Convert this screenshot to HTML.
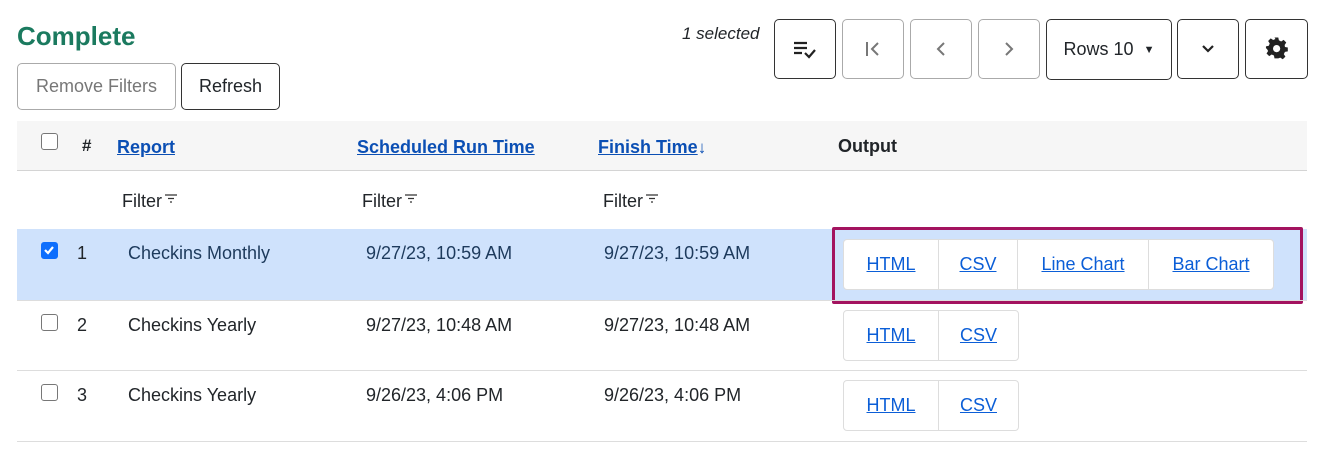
<!DOCTYPE html>
<html><head><style>
*{box-sizing:border-box;margin:0;padding:0}
body{width:1317px;height:457px;background:#fff;font-family:"Liberation Sans",sans-serif;color:#212529;position:relative;overflow:hidden}
.a{position:absolute}
.btn{position:absolute;border:1px solid #333;border-radius:5px;background:#fff;display:flex;align-items:center;justify-content:center;font-size:18px}
.dis{border-color:#aaa;color:#777}
a{color:#0b5ed7;text-decoration:underline}
.h a{color:#0b4fb4;font-weight:bold;font-size:18px}
.t{font-size:18px;position:absolute}
.cb{position:absolute;width:17px;height:17px;border:1.5px solid #777;border-radius:3px;background:#fff}
.grp{position:absolute;display:flex;border:1px solid #ddd;border-radius:4px;background:#fff;height:51px}
.grp div{display:flex;align-items:center;justify-content:center;border-right:1px solid #ddd;font-size:18px}
.grp div:last-child{border-right:none}
.hr{position:absolute;left:17px;width:1290px;height:1px;background:#ddd}
.fi{display:inline-block;vertical-align:top;margin-left:2px;margin-top:3px}
</style></head><body>
<div class="a" style="left:17px;top:21px;font-size:26px;font-weight:bold;color:#1b7a5f">Complete</div>
<div class="btn dis" style="left:17px;top:63px;width:159px;height:47px">Remove Filters</div>
<div class="btn" style="left:181px;top:63px;width:99px;height:47px">Refresh</div>
<div class="a" style="left:682px;top:24px;font-size:17px;font-style:italic">1 selected</div>
<div class="btn" style="left:774px;top:19px;width:62px;height:60px"><svg width="24" height="20" viewBox="0 0 24 20"><path d="M1 4h13M1 9h13M1 14h8" stroke="#222" stroke-width="2.2"/><path d="M12 14l4 4 6-7" stroke="#222" stroke-width="2.2" fill="none"/></svg></div>
<div class="btn dis" style="left:842px;top:19px;width:62px;height:60px"><svg width="18" height="18"><path d="M3 2v14M14 3l-6 6 6 6" stroke="#777" stroke-width="2" fill="none"/></svg></div>
<div class="btn dis" style="left:910px;top:19px;width:62px;height:60px"><svg width="18" height="18"><path d="M12 3l-6 6 6 6" stroke="#777" stroke-width="2" fill="none"/></svg></div>
<div class="btn dis" style="left:978px;top:19px;width:62px;height:60px"><svg width="18" height="18"><path d="M6 3l6 6-6 6" stroke="#777" stroke-width="2" fill="none"/></svg></div>
<div class="btn" style="left:1046px;top:19px;width:126px;height:61px">Rows 10 <span style="font-size:11px;margin-left:10px">▼</span></div>
<div class="btn" style="left:1177px;top:19px;width:62px;height:60px"><svg width="18" height="18"><path d="M4 6l5 5 5-5" stroke="#222" stroke-width="2.2" fill="none"/></svg></div>
<div class="btn" style="left:1245px;top:19px;width:63px;height:60px"><svg width="24" height="24" viewBox="0 0 24 24"><path fill="#222" d="M10 1h4l.6 3 2.4 1.2 2.6-1.7 2.8 2.8-1.7 2.6L21 11l3 .6v4l-3 .6-1.2 2.4 1.7 2.6-2.8 2.8-2.6-1.7L14 23l-.6 0H10l-.6-3-2.4-1-2.6 1.7-2.8-2.8 1.7-2.6L2 13l-1-.6v-2l3-.6 1-2.4-1.7-2.6L6 2l2.6 1.7L11 2.6z" transform="translate(0 -0.5) scale(0.95)"/><circle cx="11.6" cy="11.6" r="3.6" fill="#fff"/></svg></div>

<div class="a" style="left:17px;top:121px;width:1290px;height:49px;background:#f6f6f6"></div>
<div class="hr" style="top:170px;background:#d4d4d4"></div>
<div class="cb" style="left:41px;top:133px"></div>
<div class="a" style="left:82px;top:136px;font-weight:bold;font-size:17px">#</div>
<div class="a h" style="left:117px;top:137px"><a>Report</a></div>
<div class="a h" style="left:357px;top:137px"><a>Scheduled Run Time</a></div>
<div class="a h" style="left:598px;top:137px"><a>Finish Time</a><span style="color:#0b4fb4;font-size:17px">↓</span></div>
<div class="a" style="left:838px;top:136px;font-weight:bold;font-size:18px">Output</div>
<div class="t" style="left:122px;top:191px">Filter<svg class="fi" width="14" height="10"><path d="M1 1h12M4 4.5h6M6 8h2" stroke="#333" stroke-width="1.3"/></svg></div>
<div class="t" style="left:362px;top:191px">Filter<svg class="fi" width="14" height="10"><path d="M1 1h12M4 4.5h6M6 8h2" stroke="#333" stroke-width="1.3"/></svg></div>
<div class="t" style="left:603px;top:191px">Filter<svg class="fi" width="14" height="10"><path d="M1 1h12M4 4.5h6M6 8h2" stroke="#333" stroke-width="1.3"/></svg></div>

<div class="a" style="left:17px;top:229px;width:1290px;height:71px;background:#cfe2fc"></div>
<div class="cb" style="left:41px;top:242px;background:#0d6efd;border-color:#0d6efd"><svg width="14" height="14" style="position:absolute;left:0;top:0"><path d="M3 7l3 3 5-6" stroke="#fff" stroke-width="2.2" fill="none"/></svg></div>
<div class="t" style="left:77px;top:243px">1</div>
<div class="t" style="left:128px;top:243px;color:#1d3a5c">Checkins Monthly</div>
<div class="t" style="left:366px;top:243px;color:#1d3a5c">9/27/23, 10:59 AM</div>
<div class="t" style="left:604px;top:243px;color:#1d3a5c">9/27/23, 10:59 AM</div>
<div class="a" style="left:832px;top:227px;width:471px;height:77px;border:3px solid #a3135f;border-radius:2px"></div>
<div class="grp" style="left:843px;top:239px"><div style="width:95px"><a>HTML</a></div><div style="width:79px"><a>CSV</a></div><div style="width:131px"><a>Line Chart</a></div><div style="width:124px"><a>Bar Chart</a></div></div>
<div class="hr" style="top:300px"></div>

<div class="cb" style="left:41px;top:314px"></div>
<div class="t" style="left:77px;top:315px">2</div>
<div class="t" style="left:128px;top:315px">Checkins Yearly</div>
<div class="t" style="left:366px;top:315px">9/27/23, 10:48 AM</div>
<div class="t" style="left:604px;top:315px">9/27/23, 10:48 AM</div>
<div class="grp" style="left:843px;top:310px"><div style="width:95px"><a>HTML</a></div><div style="width:79px"><a>CSV</a></div></div>
<div class="hr" style="top:370px"></div>

<div class="cb" style="left:41px;top:384px"></div>
<div class="t" style="left:77px;top:385px">3</div>
<div class="t" style="left:128px;top:385px">Checkins Yearly</div>
<div class="t" style="left:366px;top:385px">9/26/23, 4:06 PM</div>
<div class="t" style="left:604px;top:385px">9/26/23, 4:06 PM</div>
<div class="grp" style="left:843px;top:380px"><div style="width:95px"><a>HTML</a></div><div style="width:79px"><a>CSV</a></div></div>
<div class="hr" style="top:441px"></div>
</body></html>
